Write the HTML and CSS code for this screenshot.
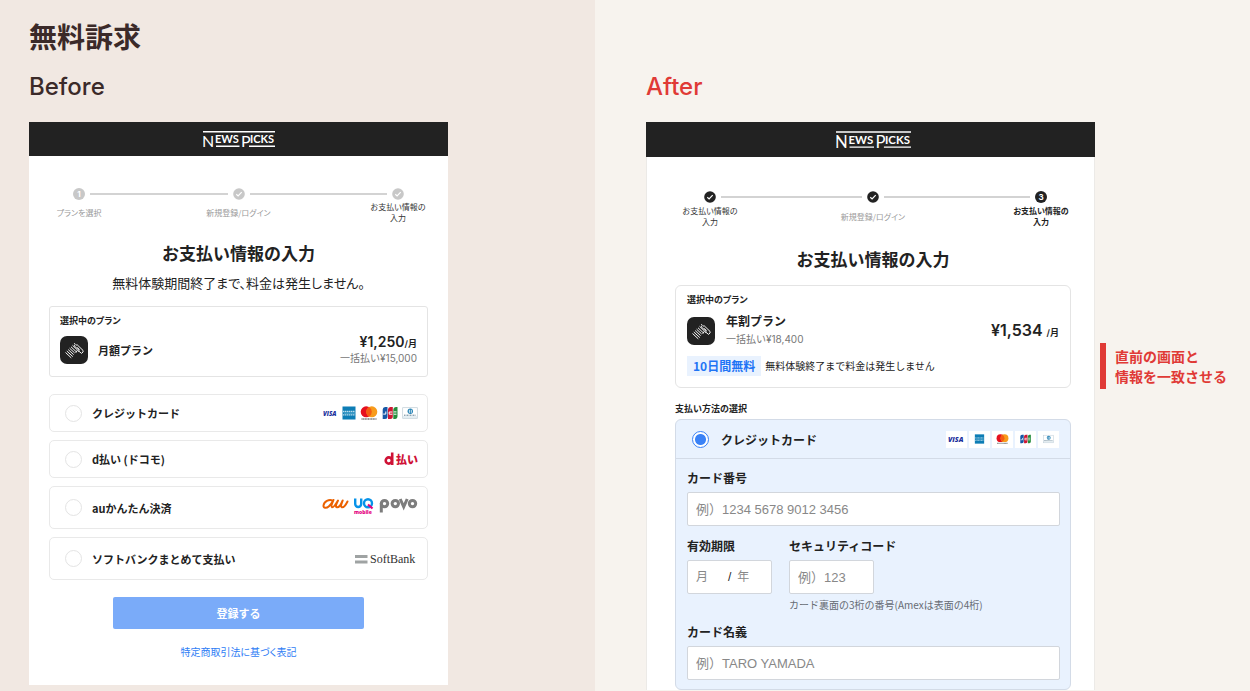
FILE: index.html
```html
<!DOCTYPE html>
<html lang="ja">
<head>
<meta charset="utf-8">
<meta name="viewport" content="width=device-width, initial-scale=1">
<title>無料訴求 Before / After</title>
<link rel="stylesheet" href="styles.css">
</head>
<body>
<svg class="defs" aria-hidden="true">
  <symbol id="zebra" viewBox="0 0 28 28">
    <rect width="28" height="28" rx="7" fill="#222"/>
    <g fill="none" stroke="#fff" stroke-width=".95">
      <path d="M5.500 16.500l5.800 5.400M6.800 15l6 5.600M8.200 13.600l5.400 5M9.600 12.200l5 4.700M11 10.800l5.300 5"/>
      <path d="M12.500 9.300l5 4.800-1.800 2.700M14.300 7.200l1 1.300-1.200 1.200 5 4.600-.8 1.500M15.900 9.200l1.300-.4 5.800 5.600.1 1.500-1.500 1.500-3-2.400M17.200 11.400l2.500 2.400"/>
    </g>
  </symbol>
  <symbol id="amex" viewBox="0 0 14 14">
    <rect x=".5" y=".5" width="13" height="13" fill="#0d7db5"/>
    <path d="M1 5.500h12M1 8.800h12" stroke="#b9dcec" stroke-width="1.300" stroke-dasharray="1.500 .5"/>
    <path d="M2 7.200h11" stroke="#67b2d3" stroke-width=".8"/>
  </symbol>
  <symbol id="mastercard" viewBox="0 0 18 14">
    <circle cx="6.200" cy="5.800" r="5.500" fill="#e6101f"/>
    <circle cx="11.800" cy="5.800" r="5.500" fill="#f79b1b"/>
    <path d="M9 1a5.500 5.500 0 0 1 0 9.600A5.500 5.500 0 0 1 9 1z" fill="#f55c12"/>
    <path d="M1.500 13h15" stroke="#333" stroke-width="1" stroke-dasharray="1.200 .4"/>
  </symbol>
  <symbol id="jcb" viewBox="0 0 16 14">
    <path d="M3.500 1H5.500v9.500a2.500 2.500 0 0 1-2.500 2.500H.7V3.500A2.600 2.600 0 0 1 3.500 1z" fill="#1657a5"/>
    <path d="M8.800 1h2v9.500A2.500 2.500 0 0 1 8.300 13H6V3.500A2.600 2.600 0 0 1 8.800 1z" fill="#ce1733"/>
    <path d="M14 1h1.500v9.500A2.500 2.500 0 0 1 13.300 13h-2V3.500A2.600 2.600 0 0 1 14 1z" fill="#258d3c"/>
    <path d="M3.800 5.500v2.600H1.200M10.300 6H7.200v2.200h3.100M11.700 5.900h2.800M11.700 8.200h2.800" stroke="#fff" stroke-width="1" fill="none"/>
  </symbol>
  <symbol id="diners" viewBox="0 0 16 14">
    <rect x=".7" y="1.700" width="14.600" height="10.600" fill="#fff" stroke="#bccbd5" stroke-width=".7"/>
    <circle cx="8.300" cy="5.300" r="2.700" fill="#2783b5"/>
    <path d="M7.400 3.800v3M9.300 3.800v3" stroke="#fff" stroke-width=".8"/>
    <path d="M2 9.200h12" stroke="#5e7d90" stroke-width="1" stroke-dasharray="1 .5"/>
    <path d="M1 11h14" stroke="#bfd4df" stroke-width=".8"/>
  </symbol>
  <symbol id="check" viewBox="0 0 12 12">
    <circle cx="6" cy="6" r="5.800" fill="currentColor"/>
    <path d="M3.300 6.300l1.800 1.700 3.600-3.800" fill="none" stroke="#fff" stroke-width="1.200"/>
  </symbol>
</svg>

<main class="compare">
  <section class="side before">
    <h1 class="title">無料訴求</h1>
    <h2 class="state">Before</h2>
    <div class="screen">
      <header class="brand">
        <svg class="logo" viewBox="0 0 72 16" role="img" aria-label="NewsPicks">
          <path d="M0 .7h72M13 15.300h23.500M46 15.300h26" stroke="#fff" stroke-width="1.400"/>
          <text class="logo-big" x="-1" y="16">N</text>
          <text class="logo-small" x="12" y="12">EWS</text>
          <text class="logo-big" x="38" y="16">P</text>
          <text class="logo-small" x="47" y="12">ICKS</text>
        </svg>
      </header>
      <div class="content">
        <ol class="steps">
          <li class="step"><span class="dot">1</span><span class="step-label">プランを選択</span></li>
          <li class="rail"></li>
          <li class="step"><svg class="tick"><use href="#check"/></svg><span class="step-label">新規登録/ログイン</span></li>
          <li class="rail"></li>
          <li class="step"><svg class="tick"><use href="#check"/></svg><span class="step-label dark">お支払い情報の<br>入力</span></li>
        </ol>
        <h3 class="heading">お支払い情報の入力</h3>
        <p class="lead">無料体験期間終了まで、料金は発生しません。</p>
        <div class="plan">
          <p class="plan-caption">選択中のプラン</p>
          <div class="plan-row">
            <svg class="app"><use href="#zebra"/></svg>
            <strong class="plan-name">月額プラン</strong>
            <div class="cost">
              <p class="price">¥1,250<small>/月</small></p>
              <p class="once">一括払い¥15,000</p>
            </div>
          </div>
        </div>
        <div class="methods">
          <label class="method"><input class="radio" type="radio" name="method"><span>クレジットカード</span>
            <span class="brands">
              <svg class="mark visa" viewBox="0 0 17 14"><text class="visa-word" x="0" y="10">VISA</text></svg><svg class="mark amex"><use href="#amex"/></svg><svg class="mark mc"><use href="#mastercard"/></svg><svg class="mark"><use href="#jcb"/></svg><svg class="mark"><use href="#diners"/></svg>
            </span></label>
          <label class="method"><input class="radio" type="radio" name="method"><span>d払い (ドコモ)</span>
            <svg class="carrier" width="34" height="16" viewBox="0 0 34 16">
              <circle cx="4.800" cy="9.500" r="3.100" fill="none" stroke="#cf1236" stroke-width="2.600"/>
              <path d="M8.200 1.500v12.500" stroke="#cf1236" stroke-width="2.600"/>
              <text class="dbarai" x="12" y="13">払い</text>
            </svg></label>
          <label class="method tall"><input class="radio" type="radio" name="method"><span>auかんたん決済</span>
            <svg class="carrier" width="97" height="24" viewBox="0 0 97 24">
              <g fill="none" stroke="#eb6100" stroke-width="2" stroke-linecap="round" stroke-linejoin="round">
                <path d="M11.500 4.500C8 3 3 5.500 2.500 9.500c-.3 3 3 3 5.500.700s3.500-4.200 4.500-6.200c-1 2.500-3 6.500-1.500 7.200 1.300.500 3.500-2.400 6-6.700-1.500 3-3 6-1.300 6.700 1.800.6 4.300-2.700 6-6.700-1 2.500-2.500 6-1 6.700 1.700.6 4.300-2.700 5.800-5.700"/>
              </g>
              <g fill="none" stroke="#0793e9" stroke-width="2.400">
                <path d="M34.200 2.500v5.500a3 3 0 0 0 6 0V2.500"/><circle cx="47" cy="7.200" r="4"/>
              </g>
              <path d="M47 8.500l4.500 4" stroke="#e4007f" stroke-width="2.200"/>
              <text class="mobile" x="33" y="18">mobile</text>
              <g fill="none" stroke="#7d7d7d" stroke-width="3">
                <circle cx="63.500" cy="7.600" r="3.200"/><path d="M60.300 7v9.500"/><circle cx="74.300" cy="7.600" r="3.200"/><path d="M79.200 3l3.500 7.800L86.200 3"/><circle cx="91.500" cy="7.600" r="3.200"/>
              </g>
            </svg></label>
          <label class="method tall"><input class="radio" type="radio" name="method"><span>ソフトバンクまとめて支払い</span>
            <svg class="carrier softbank" width="62" height="16" viewBox="0 0 62 16">
              <path d="M0 5.500h12.500M0 11h12.500" stroke="#9fa3a3" stroke-width="2.800"/>
              <text class="softbank-word" x="15" y="12">SoftBank</text>
            </svg></label>
        </div>
        <button class="submit" type="button">登録する</button>
        <p class="legal"><a href="#">特定商取引法に基づく表記</a></p>
      </div>
    </div>
  </section>

  <section class="side after">
    <h2 class="state">After</h2>
    <div class="annotated">
      <div class="screen">
        <header class="brand">
          <svg class="logo" viewBox="0 0 72 16" role="img" aria-label="NewsPicks">
            <path d="M0 .7h72M13 15.300h23.500M46 15.300h26" stroke="#fff" stroke-width="1.400"/>
            <text class="logo-big" x="-1" y="16">N</text>
            <text class="logo-small" x="12" y="12">EWS</text>
            <text class="logo-big" x="38" y="16">P</text>
            <text class="logo-small" x="47" y="12">ICKS</text>
          </svg>
        </header>
        <div class="content">
          <ol class="steps">
            <li class="step"><svg class="tick"><use href="#check"/></svg><span class="step-label dark">お支払い情報の<br>入力</span></li>
            <li class="rail"></li>
            <li class="step"><svg class="tick"><use href="#check"/></svg><span class="step-label">新規登録/ログイン</span></li>
            <li class="rail long"></li>
            <li class="step"><span class="dot">3</span><span class="step-label current">お支払い情報の<br>入力</span></li>
          </ol>
          <h3 class="heading">お支払い情報の入力</h3>
          <div class="plan">
            <p class="plan-caption">選択中のプラン</p>
            <div class="plan-row">
              <svg class="app"><use href="#zebra"/></svg>
              <div>
                <strong class="plan-name">年割プラン</strong>
                <p class="once">一括払い¥18,400</p>
              </div>
              <p class="price cost">¥1,534 <small>/月</small></p>
            </div>
            <p class="trial"><strong class="badge">10日間無料</strong>無料体験終了まで料金は発生しません</p>
          </div>
          <p class="section-label">支払い方法の選択</p>
          <div class="card-panel">
            <label class="panel-head"><input class="radio" type="radio" name="after-method" checked><span>クレジットカード</span>
              <span class="brands">
                <span class="chip"><svg class="mark visa" viewBox="0 0 17 14"><text class="visa-word" x="0" y="10">VISA</text></svg></span><span class="chip"><svg class="mark amex"><use href="#amex"/></svg></span><span class="chip"><svg class="mark mc"><use href="#mastercard"/></svg></span><span class="chip"><svg class="mark"><use href="#jcb"/></svg></span><span class="chip"><svg class="mark"><use href="#diners"/></svg></span>
              </span></label>
            <div class="fields">
              <div class="field">
                <label for="number">カード番号</label>
                <input class="box" id="number" type="text" placeholder="例）1234 5678 9012 3456">
              </div>
              <div class="pair">
                <div class="field">
                  <label for="month">有効期限</label>
                  <div class="box expiry"><input id="month" type="text" placeholder="月"><span>/</span><input type="text" aria-label="年" placeholder="年"></div>
                </div>
                <div class="field">
                  <label for="code">セキュリティコード</label>
                  <input class="box short" id="code" type="text" placeholder="例）123">
                  <p class="help">カード裏面の3桁の番号(Amexは表面の4桁)</p>
                </div>
              </div>
              <div class="field">
                <label for="holder">カード名義</label>
                <input class="box" id="holder" type="text" placeholder="例）TARO YAMADA">
              </div>
            </div>
          </div>
        </div>
      </div>
      <aside class="note"><p>直前の画面と<br>情報を一致させる</p></aside>
    </div>
  </section>
</main>
</body>
</html>
```
FILE: styles.css
```css
* {
  box-sizing: border-box;
}

body,
h1,
h2,
h3,
p,
ol {
  margin: 0;
  padding: 0;
}

body {
  color: #222;
  font-family: "Noto Sans CJK JP", sans-serif;
  font-size: 12px;
}

input,
button {
  font: inherit;
  margin: 0;
}

.defs {
  position: absolute;
  width: 0;
  height: 0;
}

/* Two halves */
.compare {
  display: grid;
  grid-template-columns: 476fr 524fr;
  min-height: 100vh;
}

.before {
  padding: 16px 147px 5px 29px;
  background: #f1e8e2;
}

.after {
  padding: 71px 0 0 51px;
  background: #f7f3ee;
}

.title {
  margin-bottom: 15px;
  color: #3b2a29;
  font-size: 28px;
  line-height: 40px;
}

.state {
  margin-bottom: 19px;
  color: #3b2a29;
  font-family: Inter, sans-serif;
  font-size: 24px;
  font-weight: 500;
  font-variant-ligatures: none;
  line-height: 32px;
}

.after .state {
  color: #e03a36;
}

.screen {
  background: #fff;
}

.annotated {
  display: grid;
  grid-template-columns: 1fr 155px;
}

.after .screen {
  box-shadow: inset 1px 0 #eceae7, inset -1px 0 #eceae7;
}

.brand {
  display: flex;
  align-items: center;
  justify-content: center;
  height: 34px;
  background: #222;
}

.after .brand {
  height: 35px;
  padding-left: 5px;
}

.logo {
  width: 72px;
  height: 16px;
  fill: #fff;
}

.after .logo {
  width: 75px;
  height: 17px;
}

.logo-big,
.logo-small {
  font-family: Lato, sans-serif;
}

.logo-big {
  font-size: 16px;
}

.logo-small {
  font-size: 11px;
  font-weight: 700;
}

.content {
  padding: 32px 20px 25px;
}

.after .content {
  padding: 34px 24px 0 29px;
}

/* Progress */
.steps {
  display: flex;
  margin: 0 24px 18px;
  list-style: none;
}

.after .steps {
  margin: 0 24px 20px 29px;
}

.step {
  display: flex;
  flex-direction: column;
  align-items: center;
  gap: 1px;
  width: 12px;
  color: #c8c8c8;
}

.after .step {
  gap: 2px;
  color: #222;
}

.dot {
  width: 12px;
  height: 12px;
  border-radius: 50%;
  background: currentColor;
  font-family: Inter, sans-serif;
  font-size: 8px;
  font-weight: 700;
  line-height: 12px;
  text-align: center;
}

.dot::first-letter {
  color: #fff;
}

.tick {
  width: 12px;
  height: 12px;
}

.rail {
  flex: 141;
  height: 2px;
  margin: 5px 5px 0;
  background: #d3d3d3;
}

.rail.long {
  flex: 146;
}

.step-label {
  display: flex;
  align-items: center;
  height: 22px;
  color: #999;
  font-size: 8px;
  font-feature-settings: "palt";
  line-height: 11px;
  text-align: center;
  white-space: nowrap;
}

.step-label.dark,
.step-label.current {
  display: block;
  color: #333;
}

.step-label.current {
  color: #222;
  font-weight: 700;
}

.heading {
  font-size: 17px;
  line-height: 24px;
  text-align: center;
}

.after .heading {
  margin-bottom: 14px;
}

.lead {
  margin: 8px 0 13px;
  font-size: 13px;
  font-feature-settings: "palt";
  line-height: 20px;
  text-align: center;
}

/* Selected plan */
.plan {
  padding: 8px 10px 9px;
  border: 1px solid #e4e4e4;
  border-radius: 3px;
}

.after .plan {
  padding: 8px 11px 11px;
  border-radius: 6px;
}

.plan-caption {
  margin-bottom: 6px;
  font-size: 9px;
  font-weight: 700;
  font-feature-settings: "palt";
  line-height: 12px;
}

.plan-row {
  display: flex;
  align-items: center;
  gap: 10px;
}

.after .plan-row {
  gap: 11px;
}

.app {
  width: 28px;
  height: 28px;
}

.plan-name {
  display: block;
  font-size: 11px;
  line-height: 16px;
}

.after .plan-name {
  font-size: 12px;
  line-height: 18px;
}

.cost {
  margin-left: auto;
  text-align: right;
}

.price {
  font-family: Inter, "Noto Sans CJK JP", sans-serif;
  font-size: 14px;
  font-weight: 600;
  line-height: 17px;
}

.after .price {
  font-size: 16px;
}

.price small {
  font-size: 9px;
  line-height: 1;
}

.once {
  color: #777;
  font-family: Inter, "Noto Sans CJK JP", sans-serif;
  font-size: 10px;
  line-height: 17px;
}

.after .once {
  line-height: 19px;
}

.trial {
  display: flex;
  align-items: center;
  gap: 4px;
  margin-top: 7px;
  font-size: 10px;
  line-height: 20px;
}

.badge {
  padding: 0 6px;
  background: #e9f2fe;
  color: #1f74f5;
  font-size: 12px;
}

/* Payment methods */
.methods {
  display: grid;
  gap: 8px;
  margin-top: 17px;
}

.method {
  display: flex;
  align-items: center;
  gap: 10px;
  height: 38px;
  padding: 0 9px 0 15px;
  border: 1px solid #e9e9e9;
  border-radius: 5px;
  font-size: 11px;
  font-weight: 700;
}

.method.tall {
  height: 43px;
}

.radio {
  flex: none;
  width: 17px;
  height: 17px;
  border: 1px solid #e4e4e4;
  border-radius: 50%;
  background: #fff;
  appearance: none;
}

.radio:checked {
  border-color: #3b82f6;
  background: radial-gradient(circle, #3b82f6 5px, #fff 6px);
}

.brands {
  display: flex;
  align-items: center;
  gap: 4px;
  margin-left: auto;
}

.mark {
  width: 16px;
  height: 14px;
}

.mark.visa {
  width: 15px;
}

.mark.amex {
  width: 14px;
}

.mark.mc {
  width: 18px;
}

.visa-word {
  fill: #1a2f9c;
  font-family: "Open Sans", sans-serif;
  font-size: 7px;
  font-style: italic;
  font-weight: 800;
}

.carrier {
  margin-left: auto;
}

.softbank {
  margin-right: 1px;
}

.dbarai {
  fill: #cf1236;
  font-size: 11px;
  font-weight: 900;
}

.mobile {
  fill: #e4007f;
  font-family: "Open Sans", sans-serif;
  font-size: 5px;
  font-weight: 800;
}

.softbank-word {
  fill: #333;
  font-family: "Liberation Serif", serif;
  font-size: 12px;
  font-weight: 400;
}

.submit {
  display: block;
  width: 66%;
  height: 32px;
  margin: 17px auto 15px;
  border: 0;
  border-radius: 2px;
  background: #7aabf9;
  color: #fff;
  font-size: 11px;
  font-weight: 700;
}

.legal {
  font-size: 10px;
  font-feature-settings: "palt";
  line-height: 16px;
  text-align: center;
}

.legal a {
  color: #2f7df5;
  text-decoration: none;
}

/* Card form */
.section-label {
  margin: 14px 0 3px;
  font-size: 9px;
  font-weight: 700;
  line-height: 14px;
}

.card-panel {
  border: 1px solid #d3dbe7;
  border-radius: 6px;
  background: #e9f2fe;
}

.panel-head {
  display: flex;
  align-items: center;
  gap: 12px;
  height: 39px;
  padding: 0 11px 0 16px;
  border-bottom: 1px solid #d3dbe7;
  font-weight: 700;
}

.panel-head .brands {
  gap: 2px;
}

.chip {
  display: flex;
  align-items: center;
  justify-content: center;
  width: 21px;
  height: 17px;
  background: #fff;
}

.chip .mark {
  width: 13px;
  height: 10px;
}

.chip .visa {
  width: 17px;
  height: 14px;
}

.fields {
  display: grid;
  gap: 12px;
  padding: 11px 10px 9px 11px;
}

.field > label {
  display: block;
  margin-bottom: 6px;
  font-weight: 700;
  line-height: 16px;
}

.box {
  display: block;
  width: 100%;
  height: 34px;
  padding: 0 8px;
  border: 1px solid #d2d6dc;
  border-radius: 2px;
  background: #fff;
  font-family: "Liberation Sans", "Noto Sans CJK JP", sans-serif;
  font-size: 13px;
}

.box::placeholder,
.expiry input::placeholder {
  color: #888;
  opacity: 1;
}

.pair {
  display: flex;
  gap: 17px;
}

.box.short,
.box.expiry {
  width: 85px;
}

.expiry {
  display: flex;
  align-items: center;
  gap: 6px;
  font-size: 12px;
}

.expiry input {
  width: 26px;
  padding: 0;
  border: 0;
  background: none;
}

.help {
  margin-top: 4px;
  color: #666b73;
  font-size: 10px;
  line-height: 14px;
}

/* Annotation */
.note {
  padding: 221px 0 0 5px;
}

.note p {
  padding: 3px 0 3px 9px;
  border-left: 6px solid #e03a36;
  color: #e03a36;
  font-size: 14px;
  font-weight: 700;
  line-height: 20px;
}
```
